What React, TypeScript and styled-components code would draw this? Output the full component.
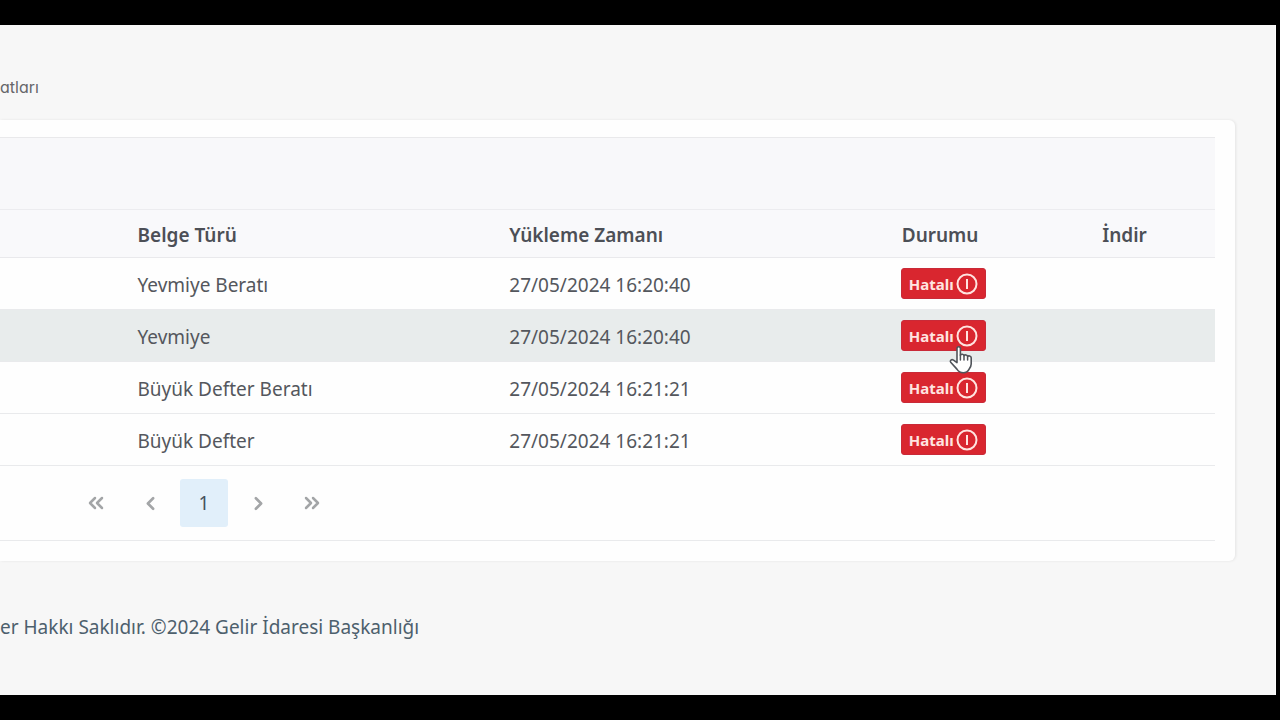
import React from "react";
import styled, { createGlobalStyle } from "styled-components";
import { ChevronLeft, ChevronRight, ChevronsLeft, ChevronsRight } from "lucide-react";

const GlobalStyle = createGlobalStyle`
  *, *::before, *::after { box-sizing: border-box; }
  body {
    margin: 0;
    background: #000;
    color: #54575d;
    font-family: "Noto Sans", "Open Sans", sans-serif;
    font-size: 19px;
    line-height: 26px;
  }
`;

const Frame = styled.div`
  min-height: 100vh;
  padding: 25px 4px 25px 0;
  display: flex;
`;

const Page = styled.div`
  flex: 1;
  min-width: 0;
  display: flex;
  flex-direction: column;
  background: #f7f7f7;
  border-right: 1px solid #fdfdfd;
`;

const Breadcrumb = styled.nav`
  padding: 50px 0 20px;
  font-family: Inter, sans-serif;
  font-size: 16px;
  line-height: 25px;
  font-feature-settings: "cv11" 1;
  color: #66666a;
`;

const Card = styled.main`
  margin-right: 40px;
  padding: 17px 20px 20px 0;
  background: #fefefe;
  border-radius: 0 6px 6px 0;
  box-shadow: 1px 0 3px rgba(0, 0, 0, 0.08);
`;

const Caption = styled.div`
  height: 73px;
  background: #f8f8fa;
  border-top: 1px solid #e9e9eb;
  border-bottom: 1px solid #ececef;
`;

const Table = styled.table`
  width: 100%;
  table-layout: fixed;
  border-collapse: separate;
  border-spacing: 0;
`;

const Column = styled.col<{ $share?: string }>`
  width: ${(p) => p.$share ?? "auto"};
`;

const HeadCell = styled.th`
  height: 48px;
  padding: 2px 16px 0;
  background: #f9f9fb;
  border-bottom: 1px solid #e9e9ec;
  color: #4c4f56;
  font-weight: 600;
  text-align: left;
`;

const Row = styled.tr<{ $hovered?: boolean }>`
  background: ${(p) => (p.$hovered ? "#e8ecec" : "transparent")};
`;

const Cell = styled.td`
  height: 52px;
  padding: 2px 16px 0;
  border-bottom: 1px solid #e9eaec;
`;

const StatusCell = styled(Cell)`
  padding: 0 15px;
`;

const StatusWrap = styled.div`
  position: relative;
  display: flex;
`;

const StatusButton = styled.button`
  display: flex;
  align-items: center;
  gap: 2px;
  height: 31px;
  padding: 0 7px;
  border: 1px solid #c92a38;
  border-radius: 3px;
  background: #d9262f;
  color: #ffe4e0;
  font: 700 15px/20px "Noto Sans", "Open Sans", sans-serif;
  cursor: pointer;
`;

const Pointer = styled.svg`
  position: absolute;
  left: 47px;
  top: 25px;
  z-index: 1;
`;

const Pager = styled.nav`
  display: flex;
  align-items: center;
  gap: 6px;
  height: 75px;
  padding-left: 72px;
  border-bottom: 1px solid #e9eaec;
`;

const PageButton = styled.button<{ $active?: boolean }>`
  display: flex;
  align-items: center;
  justify-content: center;
  width: 48px;
  height: 48px;
  padding: 0;
  border: 0;
  border-radius: 3px;
  background: ${(p) => (p.$active ? "#e1effa" : "transparent")};
  color: ${(p) => (p.$active ? "#45525c" : "#a3a5a7")};
  font: 400 19px/26px "Noto Sans", "Open Sans", sans-serif;
`;

const Footer = styled.footer`
  padding: 53px 0;
  color: #4d606d;
`;

const AlertIcon = () => (
  <svg width="22" height="22" viewBox="0 0 22 22" fill="none" stroke="currentColor" strokeWidth="2" aria-hidden="true">
    <circle cx="11" cy="11" r="9.5" />
    <path d="M11 6v10" />
  </svg>
);

const HandPointer = () => (
  <Pointer width="28" height="30" viewBox="0 0 28 30" aria-hidden="true">
    <path
      d="M9 3.500c0-2.400 3.400-2.400 3.400 0v6.700c.4-1.500 3.500-1.300 3.600.6c.6-1.400 3.500-1.100 3.600.8c.7-1.300 3.600-.9 3.600 1.200v6.200c0 2.500-1.300 4.200-2.200 5.400c-1.200 2.300-3.200 3.400-5.700 3.400c-3 0-4.900-1.300-6.400-3.700l-6.200-6.900c-1.200-1.700.9-3.300 2.800-2.100l3.500 2.500z"
      fill="#fff"
      stroke="#50545a"
      strokeWidth="1.600"
      strokeLinejoin="round"
    />
    <path d="M12.400 10v5M16 11v4M19.600 12v3" stroke="#50545a" strokeWidth="1.500" strokeLinecap="round" />
  </Pointer>
);

const documents = [
  { type: "Yevmiye Beratı", time: "27/05/2024 16:20:40" },
  { type: "Yevmiye", time: "27/05/2024 16:20:40", hovered: true },
  { type: "Büyük Defter Beratı", time: "27/05/2024 16:21:21" },
  { type: "Büyük Defter", time: "27/05/2024 16:21:21" },
];

export default function App() {
  return (
    <>
      <GlobalStyle />
      <Frame>
        <Page>
          <Breadcrumb>atları</Breadcrumb>
          <Card>
            <Caption />
            <Table>
              <colgroup>
                <Column $share="10%" />
                <Column $share="30.6%" />
                <Column $share="32.3%" />
                <Column $share="16.5%" />
                <Column />
              </colgroup>
              <thead>
                <tr>
                  <HeadCell />
                  <HeadCell scope="col">Belge Türü</HeadCell>
                  <HeadCell scope="col">Yükleme Zamanı</HeadCell>
                  <HeadCell scope="col">Durumu</HeadCell>
                  <HeadCell scope="col">İndir</HeadCell>
                </tr>
              </thead>
              <tbody>
                {documents.map((doc) => (
                  <Row key={doc.type} $hovered={doc.hovered}>
                    <Cell />
                    <Cell>{doc.type}</Cell>
                    <Cell>{doc.time}</Cell>
                    <StatusCell>
                      <StatusWrap>
                        <StatusButton type="button">
                          Hatalı
                          <AlertIcon />
                        </StatusButton>
                        {doc.hovered && <HandPointer />}
                      </StatusWrap>
                    </StatusCell>
                    <Cell />
                  </Row>
                ))}
              </tbody>
            </Table>
            <Pager aria-label="Sayfalama">
              <PageButton type="button" aria-label="İlk sayfa"><ChevronsLeft size={24} strokeWidth={2.5} /></PageButton>
              <PageButton type="button" aria-label="Önceki sayfa"><ChevronLeft size={21} strokeWidth={3} /></PageButton>
              <PageButton type="button" $active>1</PageButton>
              <PageButton type="button" aria-label="Sonraki sayfa"><ChevronRight size={21} strokeWidth={3} /></PageButton>
              <PageButton type="button" aria-label="Son sayfa"><ChevronsRight size={24} strokeWidth={2.5} /></PageButton>
            </Pager>
          </Card>
          <Footer>er Hakkı Saklıdır. ©2024 Gelir İdaresi Başkanlığı</Footer>
        </Page>
      </Frame>
    </>
  );
}
